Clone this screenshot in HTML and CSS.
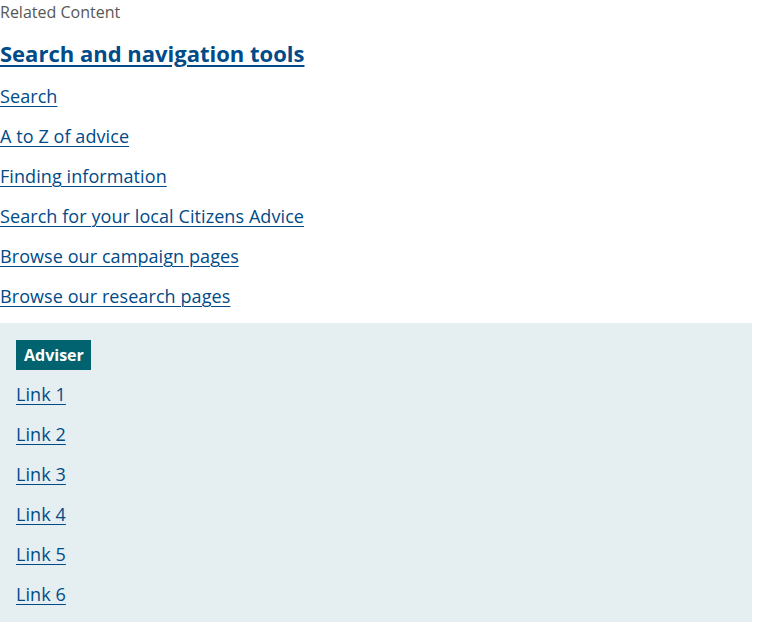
FILE: index.html
```html
<!DOCTYPE html>
<html lang="en">
<head>
<meta charset="utf-8">
<title>Related Content</title>
<link rel="stylesheet" href="styles.css">
</head>
<body>
<div class="page">
  <p class="eyebrow">Related Content</p>
  <h2 class="section-title"><a href="#">Search and navigation tools</a></h2>
  <ul class="link-list">
    <li><a href="#">Search</a></li>
    <li><a href="#">A to Z of advice</a></li>
    <li><a href="#">Finding information</a></li>
    <li><a href="#">Search for your local Citizens Advice</a></li>
    <li><a href="#">Browse our campaign pages</a></li>
    <li><a href="#">Browse our research pages</a></li>
  </ul>
  <section class="adviser-panel">
    <span class="badge">Adviser</span>
    <ul class="link-list panel-list">
      <li><a href="#">Link 1</a></li>
      <li><a href="#">Link 2</a></li>
      <li><a href="#">Link 3</a></li>
      <li><a href="#">Link 4</a></li>
      <li><a href="#">Link 5</a></li>
      <li><a href="#">Link 6</a></li>
    </ul>
  </section>
</div>
</body>
</html>
```

FILE: styles.css
```css
html, body {
  margin: 0;
  padding: 0;
  background: #ffffff;
}
body {
  font-family: "Open Sans", "Noto Sans", sans-serif;
  color: #222;
}
.page {
  width: 752px;
}
.eyebrow {
  margin: 0 0 13px;
  font-size: 16px;
  line-height: 24px;
  color: #575757;
}
.section-title {
  margin: 0 0 13px;
  font-size: 22px;
  line-height: 33px;
  font-weight: 700;
}
.section-title a {
  color: #004b88;
  text-decoration: underline;
  text-decoration-thickness: 2px;
  text-underline-offset: 3px;
}
.link-list {
  list-style: none;
  margin: 0;
  padding: 0;
}
.link-list li {
  font-size: 18px;
  line-height: 27px;
  padding-bottom: 13px;
  letter-spacing: 0.08px;
}
.link-list a {
  color: #004b88;
  text-decoration: underline;
  text-decoration-thickness: 1px;
  text-underline-offset: 3px;
}
.adviser-panel {
  background: #e5eef1;
  padding: 17px 16px 16px;
  display: flex;
  flex-direction: column;
  align-items: flex-start;
}
.badge {
  display: inline-block;
  background: #00636f;
  color: #ffffff;
  font-weight: 700;
  font-size: 16px;
  line-height: 30px;
  padding: 0 7px 0 8px;
}
.panel-list {
  margin-top: 11px;
}
```
